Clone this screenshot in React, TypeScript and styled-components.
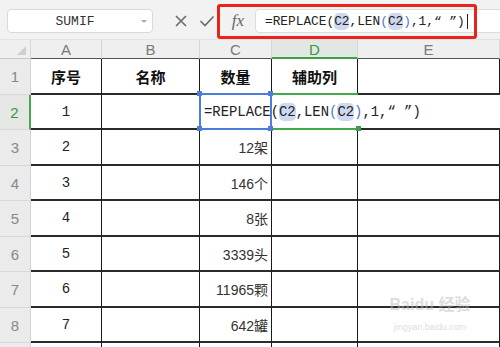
import React from "react";
import styled, { createGlobalStyle, css } from "styled-components";

const Global = createGlobalStyle`
  html, body { margin: 0; padding: 0; background: #f2f2f2; }
  body { width: 500px; height: 347px; overflow: hidden; }
  * { box-sizing: border-box; }
`;

const Page = styled.div`
  position: relative;
  width: 500px;
  height: 347px;
  overflow: hidden;
  display: flex;
  flex-direction: column;
  background: #f2f2f2;
`;

const Toolbar = styled.div`
  position: relative;
  height: 40px;
  display: flex;
  align-items: center;
  padding: 0 0 0 7px;
  background: #f2f2f2;
  border-bottom: 1px solid #e2e2e2;
`;

const NameBox = styled.div`
  position: relative;
  width: 146px;
  height: 24px;
  margin-top: 3px;
  background: #fff;
  border: 1px solid #d9d9d9;
  border-radius: 4px;
  display: flex;
  align-items: center;
  justify-content: center;
  font-family: "Liberation Mono", monospace;
  font-size: 13px;
  color: #333;
  padding-right: 10px;
`;

const Caret = styled.span`
  position: absolute;
  right: 5px;
  top: 10px;
  width: 0;
  height: 0;
  border-left: 3px solid transparent;
  border-right: 3px solid transparent;
  border-top: 3px solid #aaa;
`;

const IconButton = styled.div<{ $first?: boolean }>`
  width: 26px;
  height: 24px;
  margin-top: 3px;
  margin-left: ${(p) => (p.$first ? "15px" : "0")};
  display: flex;
  align-items: center;
  justify-content: center;
`;

const Fx = styled.div`
  width: 28px;
  margin-left: 4px;
  margin-top: 2px;
  text-align: center;
  font-family: "Liberation Serif", serif;
  font-style: italic;
  font-size: 17px;
  color: #666;
`;

const FormulaInput = styled.div`
  flex: 1;
  height: 24px;
  margin-top: 3px;
  margin-left: 3px;
  margin-right: -6px;
  background: #fff;
  border: 1px solid #dcdcdc;
  border-radius: 4px;
  display: flex;
  align-items: center;
  padding-left: 9px;
  font-family: "Liberation Mono", monospace;
  font-size: 12.8px;
  color: #222;
  white-space: pre;
`;

const TextCursor = styled.span`
  display: inline-block;
  width: 1px;
  height: 15px;
  background: #222;
  margin-left: 2px;
`;

const RedFrame = styled.div`
  position: absolute;
  left: 217px;
  top: 4px;
  width: 260px;
  height: 35px;
  border: 3px solid #e8231c;
  border-radius: 3px;
  pointer-events: none;
`;

const Sheet = styled.div`
  flex: 1;
  display: grid;
  grid-template-columns: 31px 71px 98px 72px 86px 1fr;
  grid-template-rows: 19px 36px 35px 36px 35px 36px 35px 36px 35px 1fr;
  background: #fff;
`;

const Corner = styled.div`
  background: #efefef;
  border-right: 1px solid #d6d6d6;
  border-bottom: 1px solid #c8c8c8;
  display: flex;
  align-items: flex-end;
  justify-content: flex-end;
  padding: 0 4px 3px 0;
`;

const Triangle = styled.span`
  width: 0;
  height: 0;
  border-left: 9px solid transparent;
  border-bottom: 9px solid #cfcfcf;
`;

const ColHead = styled.div<{ $active?: boolean }>`
  background: ${(p) => (p.$active ? "#e3e7e3" : "#efefef")};
  border-right: 1px solid #d6d6d6;
  border-bottom: ${(p) => (p.$active ? "2px solid #3f9f45" : "1px solid #555")};
  display: flex;
  align-items: center;
  justify-content: center;
  font-family: "Liberation Sans", sans-serif;
  font-size: 15px;
  color: ${(p) => (p.$active ? "#3a963f" : "#7a7a7a")};
  padding-top: 1px;
`;

const RowHead = styled.div<{ $active?: boolean }>`
  background: ${(p) => (p.$active ? "#e4e7e4" : "#ebebeb")};
  border-right: ${(p) => (p.$active ? "2px solid #46a84b" : "1px solid #d2d2d2")};
  border-bottom: 1px solid #d8d8d8;
  display: flex;
  align-items: center;
  justify-content: center;
  font-family: "Liberation Sans", sans-serif;
  font-size: 15px;
  color: ${(p) => (p.$active ? "#3a963f" : "#888")};
`;

const Cell = styled.div<{ $align?: "left" | "center" | "right"; $kind?: "head" | "serial" | "qty" | "plain" }>`
  border-right: 1px solid #1a1a1a;
  border-bottom: 2px solid #2b2b2b;
  display: flex;
  align-items: center;
  justify-content: ${(p) => (p.$align === "right" ? "flex-end" : p.$align === "left" ? "flex-start" : "center")};
  padding: 0 3px;
  color: #222;
  white-space: nowrap;
  ${(p) =>
    p.$kind === "head" &&
    css`
      font-family: "Noto Sans CJK SC", sans-serif;
      font-weight: 700;
      font-size: 15px;
      color: #111;
    `}
  ${(p) =>
    p.$kind === "serial" &&
    css`
      font-family: "Liberation Mono", monospace;
      font-size: 14px;
    `}
  ${(p) =>
    p.$kind === "qty" &&
    css`
      font-family: "Liberation Sans", "Noto Sans CJK SC", sans-serif;
      font-size: 14px;
      color: #333;
    `}
`;

const EditRow = styled.div`
  grid-column: 4 / span 3;
  position: relative;
  border-bottom: 2px solid #2b2b2b;
  display: flex;
  align-items: center;
  padding-left: 4px;
  font-family: "Liberation Mono", monospace;
  font-size: 13.9px;
  color: #222;
  white-space: pre;
`;

const Ref = styled.span`
  background: #cdd9f1;
  border-radius: 5px;
  padding: 1px 0;
`;

const Paren = styled.span`
  color: #4e78d6;
`;

const BlueBox = styled.div`
  position: absolute;
  left: -1px;
  top: -2px;
  width: 73px;
  height: 37px;
  border: 2px solid #4d7ddb;
  pointer-events: none;
`;

const GreenLine = styled.div<{ $pos: "top" | "bottom" }>`
  position: absolute;
  left: 72px;
  width: 86px;
  height: 2px;
  background: #45a84a;
  ${(p) => (p.$pos === "top" ? "top: -2px;" : "bottom: -2px;")}
`;

const Handle = styled.span<{ $x: number; $y: number; $green?: boolean }>`
  position: absolute;
  width: 5px;
  height: 5px;
  background: ${(p) => (p.$green ? "#3f9f45" : "#4d7ddb")};
  left: ${(p) => p.$x}px;
  top: ${(p) => p.$y}px;
`;

const Filler = styled.div<{ $head?: boolean }>`
  background: ${(p) => (p.$head ? "#ebebeb" : "#fff")};
  border-right: ${(p) => (p.$head ? "1px solid #d2d2d2" : "1px solid #1a1a1a")};
`;

const Watermark = styled.div`
  position: absolute;
  left: 380px;
  top: 296px;
  width: 100px;
  display: flex;
  flex-direction: column;
  align-items: center;
  pointer-events: none;
  white-space: nowrap;
  color: rgba(185, 185, 185, 0.5);
  font-family: "Liberation Sans", "Noto Sans CJK SC", sans-serif;
`;

const WmBrand = styled.div`
  font-size: 16px;
  font-weight: 700;
  line-height: 18px;
`;

const WmUrl = styled.div`
  font-size: 9px;
  line-height: 11px;
  margin-top: 8px;
`;

const columns = ["A", "B", "C", "D", "E"];

const rows: { n: number; serial: string; qty: string }[] = [
  { n: 3, serial: "2", qty: "12架" },
  { n: 4, serial: "3", qty: "146个" },
  { n: 5, serial: "4", qty: "8张" },
  { n: 6, serial: "5", qty: "3339头" },
  { n: 7, serial: "6", qty: "11965颗" },
  { n: 8, serial: "7", qty: "642罐" },
];

const Formula: React.FC = () => (
  <>
    =REPLACE(<Ref>C2</Ref>,LEN<Paren>(</Paren>
    <Ref>C2</Ref>
    <Paren>)</Paren>,1,“ ”)
  </>
);

export default function App() {
  return (
    <Page>
      <Global />
      <Toolbar>
        <NameBox>
          SUMIF
          <Caret />
        </NameBox>
        <IconButton $first>
          <svg width="14" height="14" viewBox="0 0 14 14">
            <path d="M2 2 L12 12 M12 2 L2 12" stroke="#6a6a6a" strokeWidth="1.6" fill="none" />
          </svg>
        </IconButton>
        <IconButton>
          <svg width="16" height="14" viewBox="0 0 16 14">
            <path d="M1.5 7 L6 11.5 L14.5 2.5" stroke="#6a6a6a" strokeWidth="1.6" fill="none" />
          </svg>
        </IconButton>
        <Fx>fx</Fx>
        <FormulaInput>
          <Formula />
          <TextCursor />
        </FormulaInput>
        <RedFrame />
      </Toolbar>
      <Sheet>
        <Corner>
          <Triangle />
        </Corner>
        {columns.map((c) => (
          <ColHead key={c} $active={c === "D"}>
            {c}
          </ColHead>
        ))}

        <RowHead>1</RowHead>
        <Cell $kind="head">序号</Cell>
        <Cell $kind="head">名称</Cell>
        <Cell $kind="head">数量</Cell>
        <Cell $kind="head">辅助列</Cell>
        <Cell />

        <RowHead $active>2</RowHead>
        <Cell $kind="serial">1</Cell>
        <Cell />
        <EditRow>
          <Formula />
          <BlueBox />
          <GreenLine $pos="top" />
          <GreenLine $pos="bottom" />
          <Handle $x={-3} $y={-4} />
          <Handle $x={68} $y={-4} />
          <Handle $x={-3} $y={31} />
          <Handle $x={68} $y={31} />
          <Handle $x={156} $y={31} $green />
        </EditRow>

        {rows.map((r) => (
          <React.Fragment key={r.n}>
            <RowHead>{r.n}</RowHead>
            <Cell $kind="serial">{r.serial}</Cell>
            <Cell />
            <Cell $kind="qty" $align="right">
              {r.qty}
            </Cell>
            <Cell />
            <Cell />
          </React.Fragment>
        ))}

        <Filler $head />
        <Filler />
        <Filler />
        <Filler />
        <Filler />
        <Filler />
      </Sheet>
      <Watermark>
        <WmBrand>Baidu 经验</WmBrand>
        <WmUrl>jingyan.baidu.com</WmUrl>
      </Watermark>
    </Page>
  );
}
